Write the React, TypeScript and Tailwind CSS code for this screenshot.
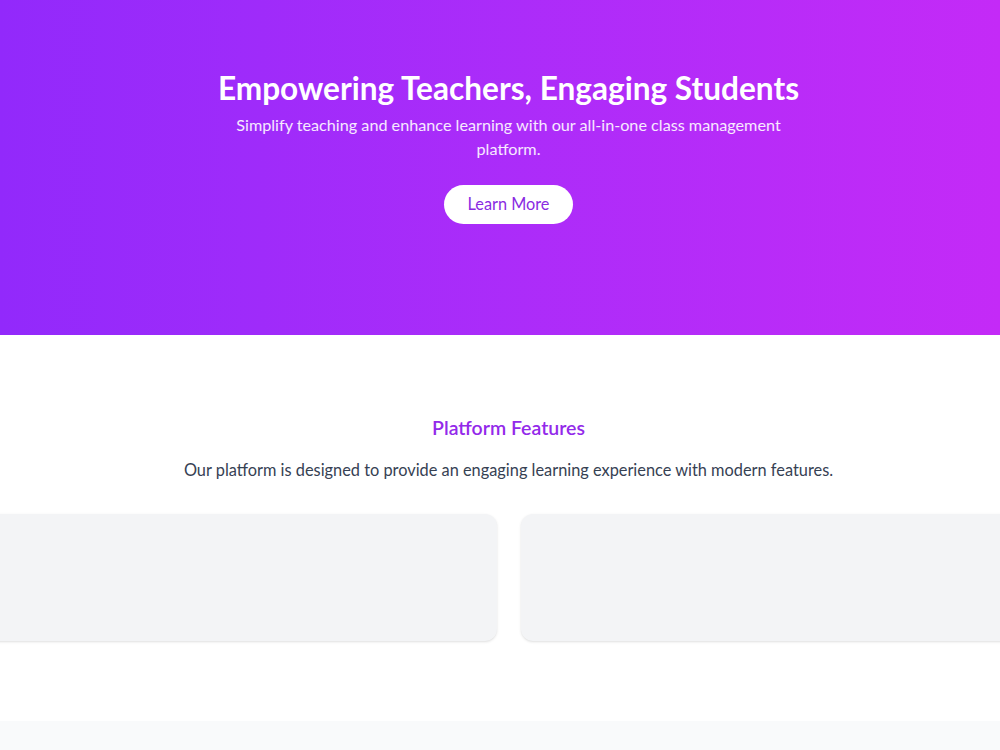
import React from "react";

const features = ["", ""];

export default function App() {
  return (
    <div className="w-full overflow-hidden bg-white font-['Lato',_'Liberation_Sans',_sans-serif]">
      {/* hero */}
      <section className="h-[335px] bg-gradient-to-r from-[#9229fb] to-[#c42af7] pt-[70px] text-center text-white">
        <div className="ml-[17px]">
          <h1 className="text-[31.6px] leading-9 font-bold">Empowering Teachers, Engaging Students</h1>
          <p className="mx-auto mt-[7px] max-w-[576px] text-[16.2px] leading-6 text-white/90">
            Simplify teaching and enhance learning with our all-in-one class management platform.
          </p>
          <button className="mt-6 h-[39px] w-[129px] rounded-full bg-white text-[16.3px] text-[#8a2be2]">
            Learn More
          </button>
        </div>
      </section>

      {/* features */}
      <section className="pt-[79px] pb-20 text-center">
        <div className="ml-[17px]">
          <h2 className="text-[19.5px] leading-7 font-semibold text-[#9329ea]">Platform Features</h2>
          <p className="mt-4 text-[16.35px] leading-6 text-gray-700">
            Our platform is designed to provide an engaging learning experience with modern features.
          </p>
        </div>
        <div className="mt-8 flex justify-center gap-6 pl-[17px]">
          {features.map((f, i) => (
            <div key={i} className="h-[127px] w-[560px] shrink-0 rounded-xl bg-gray-100 shadow-sm">
              {f}
            </div>
          ))}
        </div>
      </section>

      <section className="h-[200px] bg-gray-50" />
    </div>
  );
}
